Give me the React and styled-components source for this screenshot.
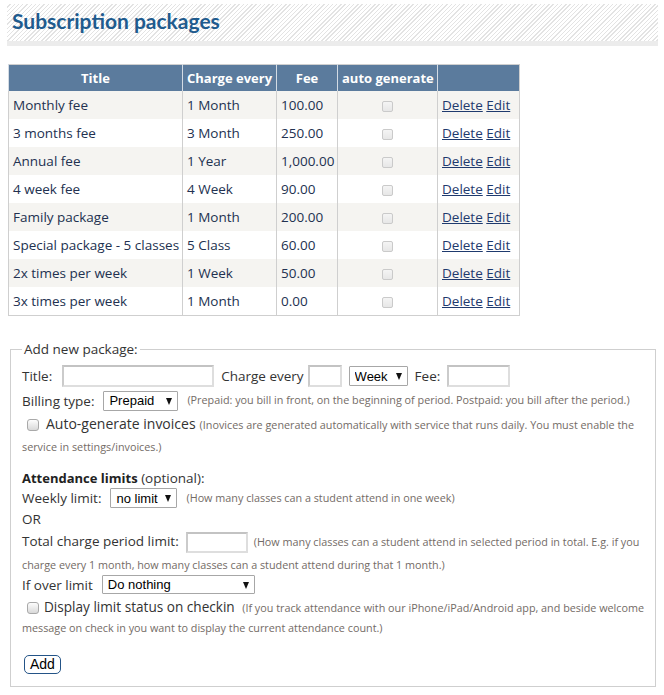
import React from 'react';
import styled, { createGlobalStyle } from 'styled-components';

const GlobalStyle = createGlobalStyle`
  html, body { margin: 0; padding: 0; background: #fff; }
  body {
    font-family: "Open Sans", "DejaVu Sans", sans-serif;
    font-size: 13.5px;
    color: #333;
  }
`;

const Page = styled.div`
  width: 664px;
  box-sizing: border-box;
  padding: 4px 6px 8px 7px;
`;

const Banner = styled.div`
  height: 37px;
  padding-left: 5px;
  background: repeating-linear-gradient(135deg, #ffffff 0 2px, #e3e3e3 2px 3px);
  border-bottom: 5px solid #ececec;
`;

const Heading = styled.h1`
  margin: 0;
  font-family: Lato, "Open Sans", sans-serif;
  font-weight: 700;
  font-size: 21px;
  line-height: 34px;
  color: #1f5b8e;
`;

const Table = styled.table`
  border-collapse: collapse;
  table-layout: fixed;
  width: 511px;
  margin: 18px 0 0 1px;
  border: 1px solid #cfcfcf;
`;

const Col = styled.col`
  width: ${(p) => p.$w}px;
`;

const Th = styled.th`
  height: 26px;
  padding: 0 4px;
  background: #5b7b9d;
  color: #fff;
  font-weight: 700;
  font-size: 13px;
  text-align: center;
  white-space: nowrap;
  border-left: 1px solid #d3dbe4;
`;

const Tr = styled.tr`
  background: ${(p) => (p.$alt ? '#f5f4f1' : '#ffffff')};
`;

const Td = styled.td`
  height: 28px;
  padding: 0 4px;
  border-left: 1px solid #cfcfcf;
  color: #223150;
  white-space: nowrap;
  text-align: ${(p) => (p.$center ? 'center' : 'left')};
`;

const GridCheck = styled.input.attrs({ type: 'checkbox', disabled: true })`
  appearance: none;
  width: 11px;
  height: 11px;
  margin: 0;
  box-sizing: border-box;
  border: 1px solid #cacaca;
  border-radius: 2px;
  background: linear-gradient(#f4f4f4, #e7e7e7);
  vertical-align: middle;
`;

const Link = styled.a`
  color: #1f3a6e;
  text-decoration: underline;
  cursor: pointer;
`;

const Fieldset = styled.fieldset`
  margin: 24px 0 0 3px;
  width: 646px;
  min-width: 0;
  box-sizing: border-box;
  border: 1px solid #cfcfcf;
  padding: 6px 11px 12px 11px;
`;

const Legend = styled.legend`
  padding: 0 2px;
  line-height: 18px;
  font-size: 13.5px;
  color: #333;
`;

const FlexRow = styled.div`
  display: flex;
  align-items: center;
  gap: ${(p) => p.$gap || 7}px;
  height: ${(p) => p.$h}px;
  white-space: nowrap;
`;

const Para = styled.div`
  line-height: ${(p) => p.$lh}px;
  margin-top: ${(p) => p.$mt || 0}px;
  white-space: nowrap;
`;

const Label = styled.span`
  color: #333;
`;

const CheckLabel = styled.span`
  font-size: ${(p) => p.$fs}px;
  color: #333;
  margin-right: 4px;
`;

const Strong = styled.span`
  font-weight: 700;
  font-size: 13px;
  color: #222;
`;

const Note = styled.span`
  font-size: 10.8px;
  line-height: 1;
  color: #736b66;
`;

const TextInput = styled.input.attrs({ type: 'text' })`
  box-sizing: border-box;
  width: ${(p) => p.$w}px;
  height: ${(p) => p.$h || 22}px;
  margin: ${(p) => (p.$inline ? '0 6px 0 7px' : `0 0 0 ${p.$ml || 0}px`)};
  padding: 0 3px;
  border: 2px solid #dedede;
  border-top-color: #c3c3c3;
  border-left-color: #cbcbcb;
  background: #fff;
  font: inherit;
  vertical-align: middle;
  outline: none;
`;

const SelectWrap = styled.span`
  position: relative;
  display: inline-flex;
  width: ${(p) => p.$w}px;
  height: ${(p) => p.$h || 20}px;
  flex: none;
`;

const Select = styled.select`
  appearance: none;
  width: 100%;
  height: 100%;
  margin: 0;
  box-sizing: border-box;
  border: 1px solid #a7a7a7;
  border-radius: 1px;
  background: #fff;
  padding: 0 16px 0 5px;
  font-family: "Liberation Sans", Arial, sans-serif;
  font-size: 13px;
  color: #000;
  outline: none;
`;

const Caret = styled.span`
  position: absolute;
  right: 6px;
  top: 50%;
  margin-top: -3px;
  width: 0;
  height: 0;
  border-left: 3.5px solid transparent;
  border-right: 3.5px solid transparent;
  border-top: 7px solid #111;
  pointer-events: none;
`;

const Check = styled.input.attrs({ type: 'checkbox' })`
  appearance: none;
  width: 12px;
  height: 12px;
  margin: 0 ${(p) => p.$mr || 6}px 0 5px;
  box-sizing: border-box;
  border: 1px solid #a9a9a9;
  border-radius: 3px;
  background: linear-gradient(#fdfdfd, #d9d9d9);
  vertical-align: middle;
`;

const AddButton = styled.button`
  display: block;
  height: 19px;
  margin: 18px 0 0 2px;
  padding: 0 5px;
  background: #fff;
  border: 1px solid #245487;
  border-radius: 5px;
  font-family: "Liberation Sans", Arial, sans-serif;
  font-size: 14px;
  line-height: 17px;
  color: #000;
`;

const Dropdown = ({ w, h, value, options }) => (
  <SelectWrap $w={w} $h={h}>
    <Select defaultValue={value}>
      {options.map((o) => (
        <option key={o}>{o}</option>
      ))}
    </Select>
    <Caret />
  </SelectWrap>
);

const packages = [
  ['Monthly fee', '1 Month', '100.00'],
  ['3 months fee', '3 Month', '250.00'],
  ['Annual fee', '1 Year', '1,000.00'],
  ['4 week fee', '4 Week', '90.00'],
  ['Family package', '1 Month', '200.00'],
  ['Special package - 5 classes', '5 Class', '60.00'],
  ['2x times per week', '1 Week', '50.00'],
  ['3x times per week', '1 Month', '0.00'],
];

export default function App() {
  return (
    <Page>
      <GlobalStyle />
      <Banner>
        <Heading>Subscription packages</Heading>
      </Banner>

      <Table>
        <colgroup>
          <Col $w={174} />
          <Col $w={94} />
          <Col $w={61} />
          <Col $w={100} />
          <Col $w={82} />
        </colgroup>
        <thead>
          <tr>
            <Th>Title</Th>
            <Th>Charge every</Th>
            <Th>Fee</Th>
            <Th>auto generate</Th>
            <Th></Th>
          </tr>
        </thead>
        <tbody>
          {packages.map(([title, every, fee], i) => (
            <Tr key={title} $alt={i % 2 === 0}>
              <Td>{title}</Td>
              <Td>{every}</Td>
              <Td>{fee}</Td>
              <Td $center>
                <GridCheck />
              </Td>
              <Td>
                <Link>Delete</Link> <Link>Edit</Link>
              </Td>
            </Tr>
          ))}
        </tbody>
      </Table>

      <Fieldset>
        <Legend>Add new package:</Legend>

        <FlexRow $h={24}>
          <Label>Title:</Label>
          <TextInput $w={152} $ml={3} />
          <Label>Charge every</Label>
          <TextInput $w={34} $ml={-3} />
          <Dropdown w={59} value="Week" options={['Day', 'Week', 'Month', 'Year', 'Class']} />
          <Label>Fee:</Label>
          <TextInput $w={63} />
        </FlexRow>

        <FlexRow $h={25} $gap={9}>
          <Label>Billing type:</Label>
          <Dropdown w={75} value="Prepaid" options={['Prepaid', 'Postpaid']} />
          <Note>
            (Prepaid: you bill in front, on the beginning of period. Postpaid: you bill after the period.)
          </Note>
        </FlexRow>

        <Para $lh={22}>
          <Check $mr={7} />
          <CheckLabel $fs={14}>Auto-generate invoices</CheckLabel>
          <Note>
            (Inovices are generated automatically with service that runs daily. You must enable the
            <br />
            service in settings/invoices.)
          </Note>
        </Para>

        <Para $lh={20} $mt={11}>
          <Strong>Attendance limits</Strong> (optional):
        </Para>

        <FlexRow $h={20} $gap={9}>
          <Label>Weekly limit:</Label>
          <Dropdown w={67} value="no limit" options={['no limit', '1', '2', '3', '4', '5']} />
          <Note>(How many classes can a student attend in one week)</Note>
        </FlexRow>

        <Para $lh={22}>OR</Para>

        <Para $lh={22}>
          <Label>Total charge period limit:</Label>
          <TextInput $w={62} $h={21} $inline />
          <Note>
            (How many classes can a student attend in selected period in total. E.g. if you
            <br />
            charge every 1 month, how many classes can a student attend during that 1 month.)
          </Note>
        </Para>

        <FlexRow $h={20} $gap={9}>
          <Label>If over limit</Label>
          <Dropdown w={153} h={19} value="Do nothing" options={['Do nothing', 'Warn', 'Deny checkin']} />
        </FlexRow>

        <Para $lh={20} $mt={2}>
          <Check $mr={5} />
          <CheckLabel $fs={13.6}>Display limit status on checkin</CheckLabel>{' '}
          <Note>
            (If you track attendance with our iPhone/iPad/Android app, and beside welcome
            <br />
            message on check in you want to display the current attendance count.)
          </Note>
        </Para>

        <AddButton type="button">Add</AddButton>
      </Fieldset>
    </Page>
  );
}
